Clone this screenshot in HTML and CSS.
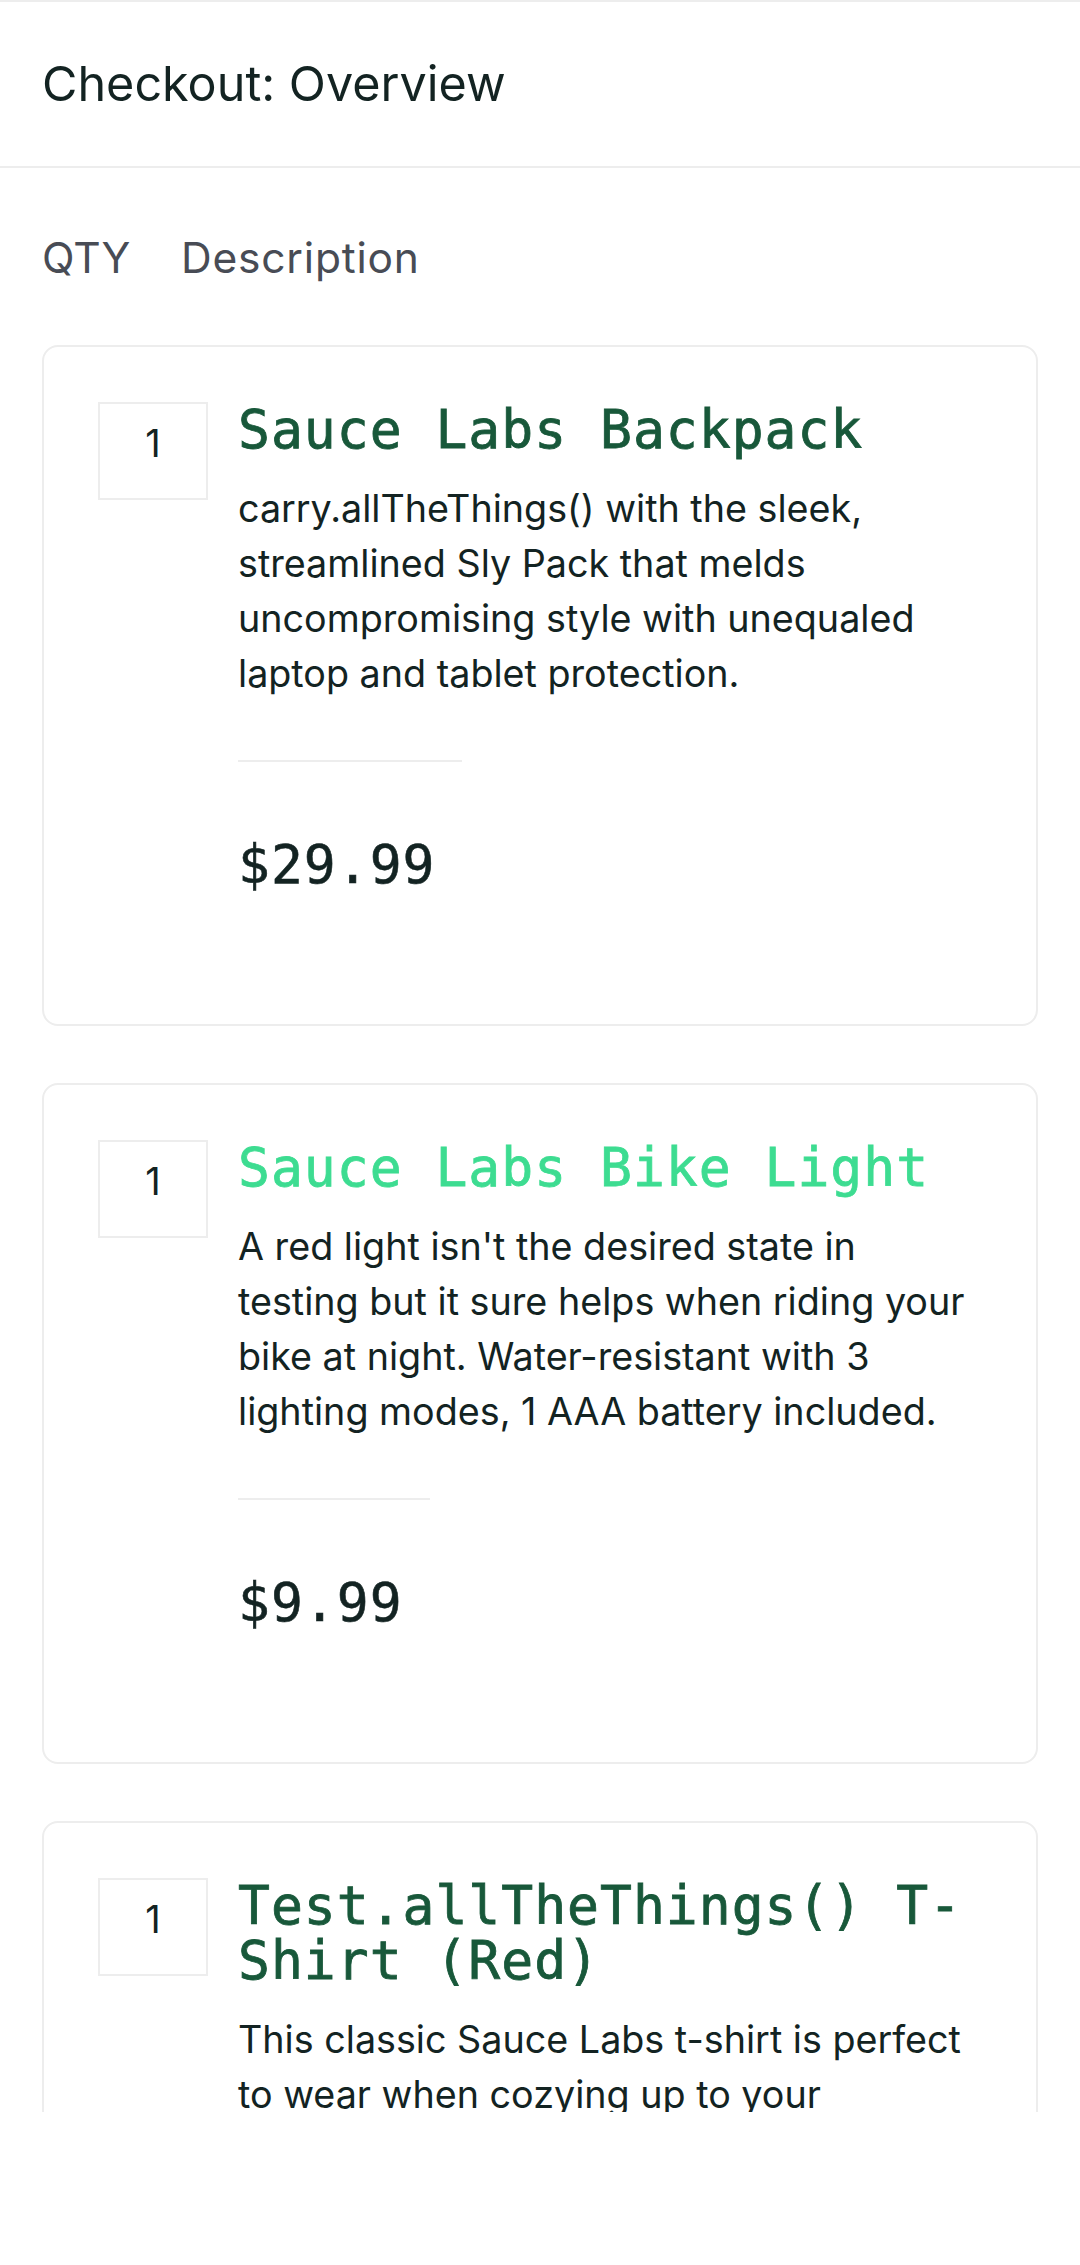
FILE: index.html
```html
<!DOCTYPE html>
<html lang="en">
<head>
<meta charset="utf-8">
<title>Checkout: Overview</title>
<link rel="stylesheet" href="styles.css">
</head>
<body>
<div class="screen">
  <header class="header">
    <h1 class="header-title">Checkout: Overview</h1>
  </header>
  <div class="labels">
    <span class="label-qty">QTY</span>
    <span class="label-desc">Description</span>
  </div>
  <div class="list">
    <div class="item">
      <div class="qty">1</div>
      <div class="details">
        <div class="name">Sauce Labs Backpack</div>
        <div class="desc">carry.allTheThings() with the sleek, streamlined Sly Pack that melds uncompromising style with unequaled laptop and tablet protection.</div>
        <div class="pricebar">
          <div class="rule"></div>
          <div class="price">$29.99</div>
        </div>
      </div>
    </div>
    <div class="item">
      <div class="qty">1</div>
      <div class="details">
        <div class="name name-active">Sauce Labs Bike Light</div>
        <div class="desc">A red light isn't the desired state in testing but it sure helps when riding your bike at night. Water-resistant with 3 lighting modes, 1 AAA battery included.</div>
        <div class="pricebar">
          <div class="rule"></div>
          <div class="price">$9.99</div>
        </div>
      </div>
    </div>
    <div class="item">
      <div class="qty">1</div>
      <div class="details">
        <div class="name">Test.allTheThings() T-Shirt (Red)</div>
        <div class="desc">This classic Sauce Labs t-shirt is perfect to wear when cozying up to your keyboard to automate a few tests. Super-soft and comfy ringspun combed cotton.</div>
        <div class="pricebar">
          <div class="rule"></div>
          <div class="price">$15.99</div>
        </div>
      </div>
    </div>
  </div>
</div>
</body>
</html>
```
FILE: styles.css
```css
* { box-sizing: border-box; }

html, body {
  margin: 0;
  padding: 0;
  background: #ffffff;
}

body {
  font-family: Inter, "Noto Sans", sans-serif;
  color: #132322;
}

.screen {
  height: 2112px;
  overflow: hidden;
  border-top: 2px solid #ededed;
}

.header {
  height: 166px;
  display: flex;
  align-items: center;
  padding-left: 42px;
  border-bottom: 2px solid #ededed;
}

.header-title {
  margin: 0;
  font-size: 48.5px;
  font-weight: 400;
  line-height: 56px;
  color: #132322;
}

.labels {
  display: flex;
  padding: 62px 0 0 42px;
  font-size: 42.5px;
  line-height: 56px;
  color: #484c55;
}

.label-qty { width: 139px; }

.label-desc { letter-spacing: 0.8px; }

.list {
  display: flex;
  flex-direction: column;
  gap: 57px;
  padding: 59px 42px 0 42px;
}

.item {
  display: flex;
  gap: 30px;
  border: 2px solid #ededed;
  border-radius: 16px;
  padding: 55px 54px 132px 54px;
}

.qty {
  flex: 0 0 110px;
  height: 98px;
  border: 2px solid #ededed;
  text-align: center;
  font-size: 38px;
  line-height: 55px;
  padding-top: 12px;
  color: #132322;
}

.details {
  flex: 1;
  min-width: 0;
}

.name {
  font-family: "DejaVu Sans Mono", "Liberation Mono", monospace;
  font-size: 53px;
  line-height: 55px;
  letter-spacing: 1px;
  -webkit-text-stroke: 0.8px currentColor;
  color: #18583a;
}

.name-active { color: #3ddc91; }

.desc {
  margin-top: 24px;
  font-size: 37.7px;
  line-height: 55px;
  color: #132322;
}

.pricebar {
  display: inline-flex;
  flex-direction: column;
  margin-top: 59px;
}

.rule {
  height: 2px;
  background: #ededed;
}

.price {
  margin-top: 75px;
  padding-right: 27px;
  font-family: "DejaVu Sans Mono", "Liberation Mono", monospace;
  font-size: 53px;
  line-height: 55px;
  letter-spacing: 1px;
  -webkit-text-stroke: 0.6px currentColor;
  color: #132322;
}
```
